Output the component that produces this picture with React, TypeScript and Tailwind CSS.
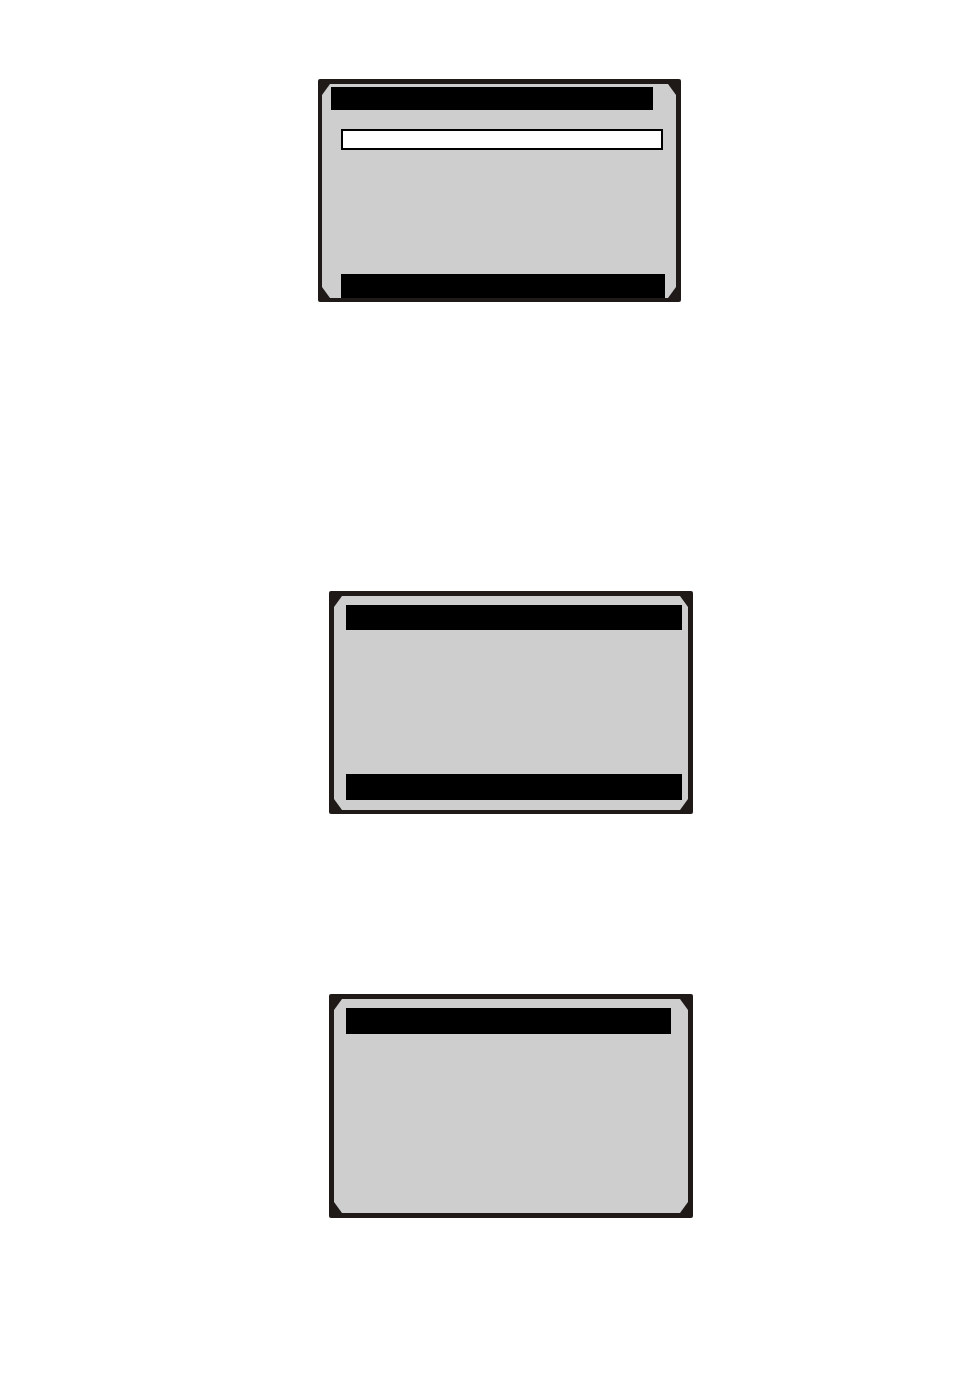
import type { ReactNode } from "react";

interface DisplayProps {
  frameClass: string;
  children: ReactNode;
}

// LCD panel: dark bezel around a grey screen with cut corners
function Display({ frameClass, children }: DisplayProps) {
  return (
    <section className={`w-full rounded-xs bg-[#1f1a17] ${frameClass}`}>
      <div className="flex min-h-[214px] flex-col bg-[#cecece] [clip-path:polygon(8px_0,calc(100%-8px)_0,100%_11px,100%_calc(100%-11px),calc(100%-8px)_100%,8px_100%,0_calc(100%-11px),0_11px)]">
        {children}
      </div>
    </section>
  );
}

export default function App() {
  return (
    <main className="min-h-screen bg-white pt-[79px] pb-[168px] font-['Liberation_Sans',sans-serif]">
      <div className="flex justify-center pl-[45px]">
        <Display frameClass="max-w-[363px] pt-[5px] pr-[5px] pb-1 pl-1">
          <header className="mt-[3px] mr-[23px] ml-[9px] h-[23px] bg-black" />
          <input
            type="text"
            aria-label="Entry"
            className="mt-[19px] mr-[13px] ml-[19px] h-[21px] border-2 border-black bg-white px-1 text-xs text-black outline-none"
          />
          <footer className="mt-auto mr-[11px] ml-[19px] h-6 bg-black" />
        </Display>
      </div>

      <div className="mt-[289px] flex justify-center pl-[68px]">
        <Display frameClass="max-w-[364px] px-[5px] pt-[5px] pb-1">
          <header className="mt-[9px] mr-[6px] ml-3 h-[25px] bg-black" />
          <footer className="mt-auto mr-[6px] mb-[10px] ml-3 h-[26px] bg-black" />
        </Display>
      </div>

      <div className="mt-[180px] flex justify-center pl-[68px]">
        <Display frameClass="max-w-[364px] p-[5px]">
          <header className="mt-[9px] mr-[17px] ml-3 h-[26px] bg-black" />
        </Display>
      </div>
    </main>
  );
}
